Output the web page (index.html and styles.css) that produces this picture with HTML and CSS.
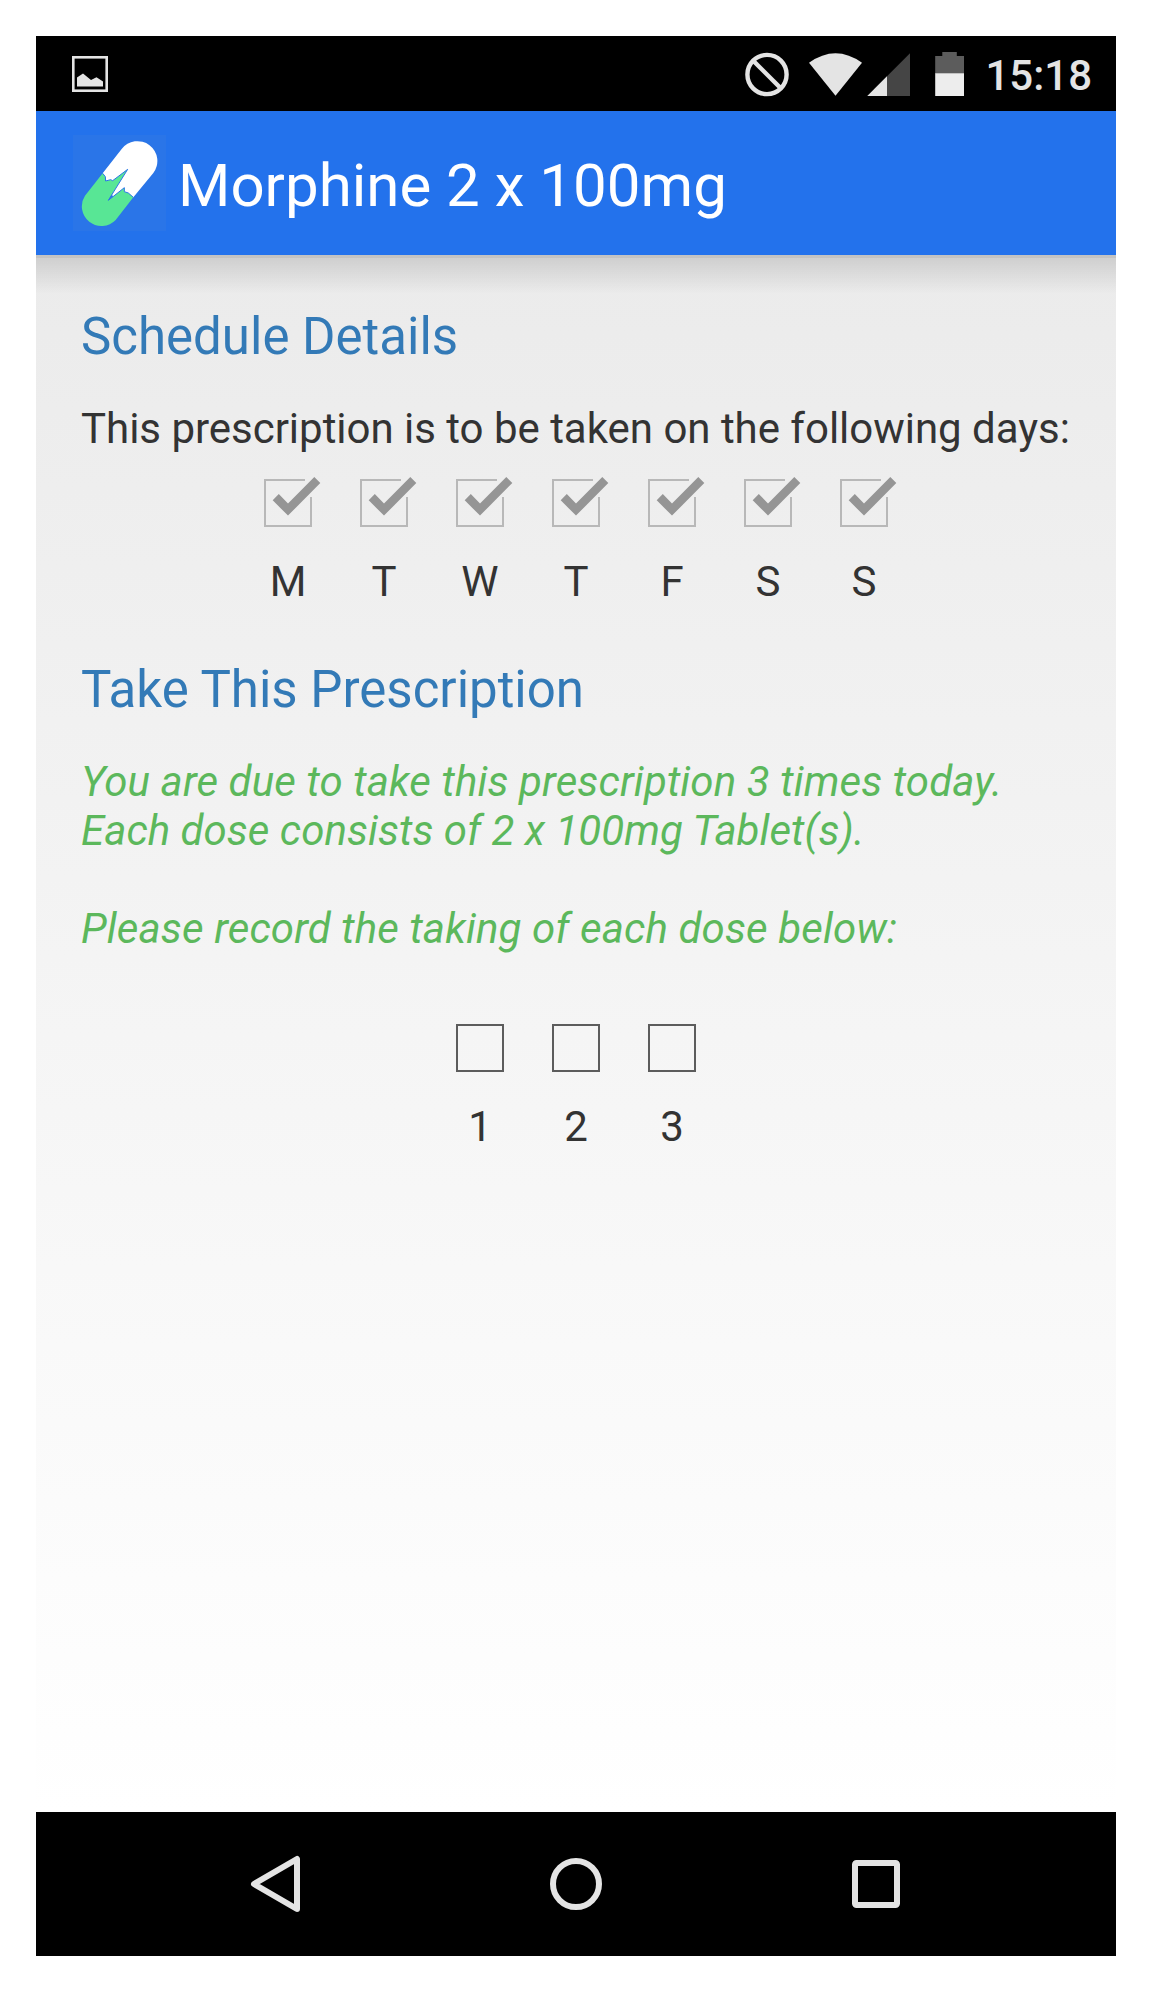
FILE: index.html
```html
<!DOCTYPE html>
<html lang="en">
<head>
<meta charset="utf-8">
<title>Morphine 2 x 100mg</title>
<link rel="stylesheet" href="styles.css">
</head>
<body>
<svg width="0" height="0" class="defs">
  <symbol id="checked" viewBox="0 0 60 52">
    <path d="M41 4H1V50H47V21" transform="translate(0 1)" fill="none" stroke="#b8b8b8" stroke-width="2"/>
    <path d="M50.3 2L56.3 8L24 40.6L8.7 25.3L14.8 19.1L24 28.4Z" fill="#959595"/>
  </symbol>
</svg>
<div class="screen">
  <header class="status">
    <svg class="status-photo" width="36" height="36" viewBox="0 0 36 36">
      <rect x="1.3" y="1.3" width="33.4" height="33.4" fill="none" stroke="#e4e4e4" stroke-width="2.6"/>
      <path d="M5 30.5V21.5L11 17.5L19 24L24.5 21.3L31 25.5V30.5Z" fill="#e4e4e4"/>
    </svg>
    <svg width="224" height="48" viewBox="741 49 224 48">
      <g fill="none" stroke="#e4e4e4" stroke-width="4.4"><circle cx="767" cy="73.5" r="19.6"/><path d="M753.5 60L780.5 87"/></g>
      <path d="M809 61.8Q835.5 42.8 862 61.8L835.5 94.8Z" fill="#e4e4e4"/>
      <path d="M867.3 95L910 52.3V95Z" fill="#454545"/>
      <path d="M867.3 95L887 75.3V95Z" fill="#e4e4e4"/>
      <path d="M942.3 51H956.8V55H964V73H935.2V55H942.3Z" fill="#5c5c5c"/>
      <path d="M935.2 72.3H964V95H935.2Z" fill="#ededed"/>
    </svg>
    <time class="clock">15:18</time>
  </header>
  <div class="appbar">
    <svg class="logo" width="93" height="96" viewBox="9 15 279 288">
      <path d="M98 130L155 57A59 59 0 0 1 250 129L190 202L140 225Z" fill="#fff"/>
      <path d="M98 130L106 140L107 153L122 149L128 152L173 118L115 211L163 173L163 185L175 189L190 202L137 270A59 59 0 0 1 45 197Z" fill="#58e695"/>
      <path d="M98 130L106 140L107 153L122 149L128 152L173 118L115 211L163 173L163 185L175 189L190 202" fill="none" stroke="#2a75e8" stroke-width="3"/>
    </svg>
    <h1>Morphine 2 x 100mg</h1>
  </div>
  <main>
    <h2>Schedule Details</h2>
    <p>This prescription is to be taken on the following days:</p>
    <div class="days">
      <label><svg><use href="#checked"/></svg>M</label>
      <label><svg><use href="#checked"/></svg>T</label>
      <label><svg><use href="#checked"/></svg>W</label>
      <label><svg><use href="#checked"/></svg>T</label>
      <label><svg><use href="#checked"/></svg>F</label>
      <label><svg><use href="#checked"/></svg>S</label>
      <label><svg><use href="#checked"/></svg>S</label>
    </div>
    <h2>Take This Prescription</h2>
    <p class="due">You are due to take this prescription 3 times today.<br><span class="dose-size">Each dose consists of 2 x 100mg Tablet(s).</span><br><br>Please record the taking of each dose below:</p>
    <div class="doses">
      <label><span class="box"></span>1</label>
      <label><span class="box"></span>2</label>
      <label><span class="box"></span>3</label>
    </div>
  </main>
  <nav>
    <svg width="60" height="60" viewBox="-30 -30 60 60"><path d="M21 -25V25L-22 0Z"/></svg>
    <svg width="60" height="60" viewBox="-30 -30 60 60"><circle r="23"/></svg>
    <svg width="60" height="60" viewBox="-30 -30 60 60"><rect x="-21" y="-21" width="42" height="42" rx="1.5"/></svg>
  </nav>
</div>
</body>
</html>
```
FILE: styles.css
```css
* { box-sizing: border-box; }
body { margin: 0; padding: 36px; background: #fff; font-family: Roboto, sans-serif; font-size: 42px; line-height: 49px; color: #333; }
.defs { display: block; height: 0; }
.screen { width: 1080px; height: 1920px; display: flex; flex-direction: column; }
svg { display: block; flex: none; }
.status { height: 75px; background: #000; display: flex; align-items: center; padding: 0 24px 0 36px; }
.status-photo { margin-right: auto; }
.clock { color: #e4e4e4; font-weight: 500; margin-left: 20px; padding-top: 4px; }
.appbar { height: 144px; background: #2372ec; display: flex; align-items: center; padding-left: 37px; }
.logo { background: #2a75e8; }
h1 { margin: 0 0 0 12px; padding-top: 5px; color: #fff; font-size: 60px; font-weight: 400; line-height: 70px; }
main { flex: 1; padding: 51px 45px 0; background: linear-gradient(#c3c3c3 3px, transparent 3px), linear-gradient(rgba(0,0,0,.13), rgba(0,0,0,0) 39px), linear-gradient(#ebebeb, #fff); }
h2 { margin: 0; font-size: 51px; font-weight: 400; line-height: 62px; color: #337ab7; }
p { margin: 36px 0 0; white-space: nowrap; letter-spacing: -.02px; }
.due { color: #5cb85c; font-style: italic; letter-spacing: .12px; }
.dose-size { letter-spacing: .03px; }
.days, .doses { display: flex; justify-content: center; }
.days { margin: 22px 0 53px; }
.doses { margin-top: 71px; }
label { width: 96px; display: flex; flex-direction: column; align-items: center; }
.days svg { width: 60px; height: 52px; margin: 0 0 30px 12px; }
.box { width: 48px; height: 48px; border: 2px solid #5c5c5c; margin-bottom: 30px; }
nav { height: 144px; background: #000; display: flex; align-items: center; justify-content: center; gap: 240px; }
nav svg { fill: none; stroke: #e4e4e4; stroke-width: 6; stroke-linejoin: round; }
```
